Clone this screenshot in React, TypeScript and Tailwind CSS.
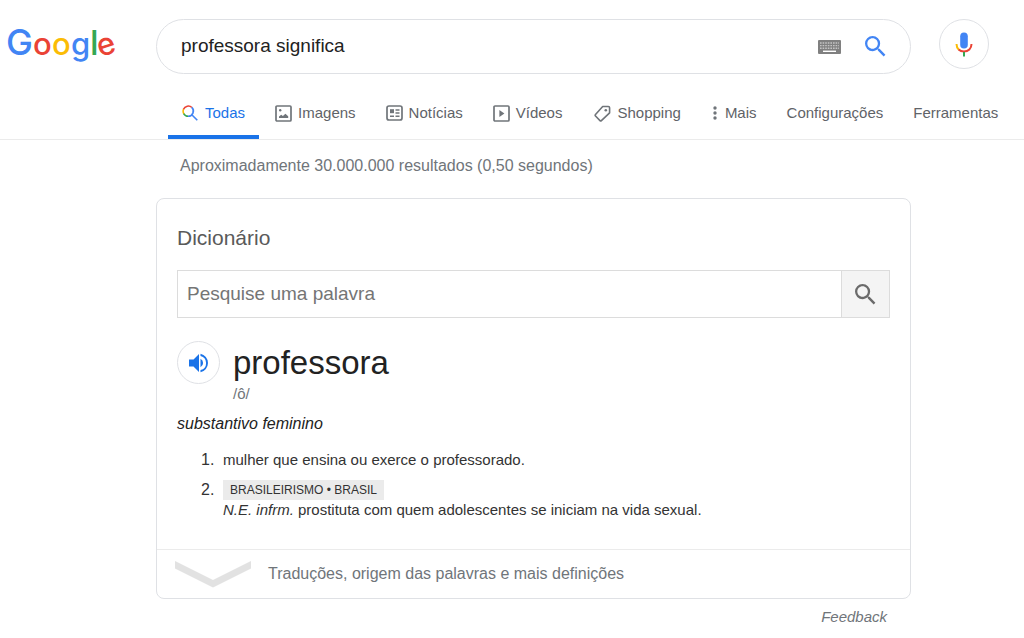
import type { ReactNode } from 'react';

type Tab = {
  label: string;
  icon?: ReactNode;
  spacing: string;
};

function GoogleLogo() {
  return (
    <svg width="118" height="52" viewBox="0 0 118 52" role="img" aria-label="Google" className="block">
      <g fontFamily="Inter, sans-serif" fontSize="31" fontWeight="500">
        <text x="-1" y="36" fontSize="36" fill="#4285f4">G</text>
        <text x="26" y="36" fill="#ea4335">o</text>
        <text x="45" y="36" fill="#fbbc05">o</text>
        <text x="64" y="36" fill="#4285f4">g</text>
        <text x="83" y="36" fontSize="34" fill="#34a853">l</text>
        <text x="90" y="36" fill="#ea4335" transform="rotate(-18 99 27)">e</text>
      </g>
    </svg>
  );
}

function SearchIcon({ className }: { className: string }) {
  return (
    <svg viewBox="3 3 18 18" className={className} fill="currentColor" aria-hidden="true">
      <path d="M15.5 14h-.79l-.28-.27A6.47 6.47 0 0 0 16 9.5 6.5 6.5 0 1 0 9.5 16c1.61 0 3.09-.59 4.23-1.57l.27.28v.79l5 4.99L20.49 19l-4.99-5zm-6 0C7.01 14 5 11.99 5 9.5S7.01 5 9.5 5 14 7.01 14 9.5 11.99 14 9.5 14z" />
    </svg>
  );
}

function KeyboardIcon() {
  return (
    <svg width="23" height="14" viewBox="0 0 23 14" aria-hidden="true">
      <rect width="23" height="14" rx="1" fill="#808080" />
      <g stroke="#c4c4c4" strokeWidth="1.4" strokeDasharray="1.6 1">
        <path d="M2 3h19M2 5.6h19M2 8.2h19" />
      </g>
      <path d="M5 11.3h13" stroke="#fff" strokeWidth="1.4" />
    </svg>
  );
}

function MicIcon() {
  return (
    <svg width="18" height="25" viewBox="0 0 18 25" fill="none" aria-hidden="true">
      <rect x="5.2" y="0.5" width="7.6" height="16" rx="3.8" fill="#4285f4" />
      <path d="M1.5 12c0 2.4.9 4.4 2.4 5.8" stroke="#fbbc05" strokeWidth="2" />
      <path d="M3.6 17.5C5 18.9 6.9 19.6 9 19.6c4.3 0 7.5-3 7.5-7.6" stroke="#ea4335" strokeWidth="2" />
      <path d="M9 20v4.4" stroke="#34a853" strokeWidth="2" />
    </svg>
  );
}

function AllIcon() {
  return (
    <svg width="16" height="16" viewBox="0 0 16 16" fill="none" strokeWidth="1.6" aria-hidden="true">
      <path d="M2 9A5.2 5.2 0 0 1 1.6 4" stroke="#fbbc05" />
      <path d="M1.5 4.3A5.2 5.2 0 0 1 9.9 2.5" stroke="#ea4335" />
      <path d="M1.7 8.6A5.2 5.2 0 0 0 6.2 11.3" stroke="#34a853" />
      <path d="M9.8 2.4A5.2 5.2 0 0 1 6 11.3M9.8 9.8l5.5 5.5" stroke="#4285f4" />
    </svg>
  );
}

function ImagesIcon() {
  return (
    <svg width="17" height="17" viewBox="0 0 17 17" fill="none" aria-hidden="true">
      <rect x="1" y="1" width="15" height="15" rx="1" stroke="#70757a" strokeWidth="1.7" />
      <circle cx="5.2" cy="5.3" r="1.2" fill="#70757a" />
      <path d="M4 13v-1.4l2.2-1.8 1.7 1.2 2.5-2.3 2.8 2.6V13z" fill="#70757a" />
    </svg>
  );
}

function NewsIcon() {
  return (
    <svg width="17" height="16" viewBox="0 0 17 16" fill="none" aria-hidden="true">
      <rect x="1" y="1" width="15" height="14" rx="2" stroke="#70757a" strokeWidth="1.7" />
      <path d="M4 4.2h4v4H4z" fill="#70757a" />
      <path d="M9.5 5h4M9.5 8h4M4 11.2h4M9.5 11.2h4" stroke="#70757a" strokeWidth="1.5" />
    </svg>
  );
}

function VideosIcon() {
  return (
    <svg width="17" height="17" viewBox="0 0 17 17" fill="none" aria-hidden="true">
      <rect x="1" y="1" width="15" height="15" rx="1" stroke="#70757a" strokeWidth="1.7" />
      <path d="M6.4 5v7l5-3.5z" fill="#70757a" />
    </svg>
  );
}

function ShoppingIcon() {
  return (
    <svg width="17" height="17" viewBox="0 0 17 17" fill="none" aria-hidden="true">
      <path
        d="M8.7 1.5h5.6c.8 0 1.3.5 1.3 1.3v5L7.4 15.6c-.5.5-1 .4-1.4 0L1.5 11c-.5-.5-.4-1 0-1.5z"
        stroke="#70757a"
        strokeWidth="1.6"
        strokeLinejoin="round"
      />
      <circle cx="11.8" cy="5.2" r="1.3" fill="#70757a" />
    </svg>
  );
}

function MoreIcon() {
  return (
    <svg width="4" height="16" viewBox="0 0 4 16" fill="#70757a" aria-hidden="true">
      <circle cx="2" cy="3" r="1.7" />
      <circle cx="2" cy="8" r="1.7" />
      <circle cx="2" cy="13" r="1.7" />
    </svg>
  );
}

function SpeakerIcon() {
  return (
    <svg width="20" height="20" viewBox="0 0 20 20" fill="#1a73e8" aria-hidden="true">
      <path d="M0 6.5v7h4.5L10 19V1L4.5 6.5z" />
      <path d="M11.5 5.8v8.4a4.7 4.7 0 0 0 0-8.4z" />
      <path d="M11.5.8v2.1a7.3 7.3 0 0 1 0 14.2v2.1a9.4 9.4 0 0 0 0-18.4z" />
    </svg>
  );
}

const tabs: Tab[] = [
  { label: 'Imagens', icon: <ImagesIcon />, spacing: 'ml-4 gap-[6px]' },
  { label: 'Notícias', icon: <NewsIcon />, spacing: 'ml-[30px] gap-[6px]' },
  { label: 'Vídeos', icon: <VideosIcon />, spacing: 'ml-[30px] gap-[6px]' },
  { label: 'Shopping', icon: <ShoppingIcon />, spacing: 'ml-8 gap-[6px]' },
  { label: 'Mais', icon: <MoreIcon />, spacing: 'ml-8 gap-2' },
  { label: 'Configurações', spacing: 'ml-[30px]' },
  { label: 'Ferramentas', spacing: 'ml-[30px]' },
];

function SearchHeader() {
  return (
    <header className="border-b border-[#ebebeb] pt-[19px]">
      <div className="flex items-start">
        <a href="#" className="w-[156px] shrink-0 pl-[7px]">
          <GoogleLogo />
        </a>
        <form
          role="search"
          className="flex h-[55px] max-w-[755px] flex-1 items-center rounded-full border border-[#dfe1e5] pr-6 pl-6"
        >
          <input
            type="text"
            aria-label="Pesquisar"
            defaultValue="professora significa"
            className="min-w-0 flex-1 bg-transparent text-[19px] text-[#222] outline-none"
          />
          <button type="button" aria-label="Ferramentas de entrada de texto">
            <KeyboardIcon />
          </button>
          <button type="submit" aria-label="Pesquisa Google" className="ml-6 text-[#4285f4]">
            <SearchIcon className="size-[21px]" />
          </button>
        </form>
        <button
          type="button"
          aria-label="Pesquisa por voz"
          className="mr-[35px] ml-7 flex size-[50px] shrink-0 items-center justify-center rounded-full border border-[#dfe1e5]"
        >
          <MicIcon />
        </button>
      </div>

      <nav className="mt-[13px] ml-[168px] flex h-[52px] text-[15px] whitespace-nowrap text-[#5f6368]">
        <a
          href="#"
          aria-current="page"
          className="flex items-center gap-[7px] border-b-4 border-[#1a73e8] px-[14px] pt-1 text-[#1a73e8]"
        >
          <AllIcon />
          Todas
        </a>
        {tabs.map((tab) => (
          <a key={tab.label} href="#" className={`flex items-center border-b-4 border-transparent pt-1 ${tab.spacing}`}>
            {tab.icon}
            {tab.label}
          </a>
        ))}
      </nav>
    </header>
  );
}

function DictionaryCard() {
  return (
    <section className="mt-[21px] rounded-lg border border-[#dfe1e5]">
      <div className="px-5 pt-6 pb-[29px]">
        <h2 className="text-[21px] leading-[30px] text-[#5a5a5a]">Dicionário</h2>

        <form className="mt-[17px] flex h-12 border border-[#dcdcdc]">
          <input
            type="text"
            aria-label="Pesquise uma palavra"
            placeholder="Pesquise uma palavra"
            className="min-w-0 flex-1 px-[9px] text-[19px] outline-none placeholder:text-[#757575]"
          />
          <button
            type="submit"
            aria-label="Pesquisar palavra"
            className="flex w-12 items-center justify-center border-l border-[#dcdcdc] bg-[#f4f4f4] text-[#6b6b6b]"
          >
            <SearchIcon className="size-[21px]" />
          </button>
        </form>

        <div className="mt-[23px] flex items-start gap-[13px]">
          <button
            type="button"
            aria-label="Ouvir pronúncia"
            className="flex size-[43px] items-center justify-center rounded-full border border-[#dfe1e5]"
          >
            <SpeakerIcon />
          </button>
          <div>
            <h3 className="text-[33px] leading-[44px] text-[#222]">professora</h3>
            <p className="text-[15px] leading-[17px] text-[#70757a]">/ô/</p>
          </div>
        </div>

        <p className="mt-3 text-base leading-5 text-[#222] italic">substantivo feminino</p>

        <ol className="mt-4 text-[15px] leading-5 text-[#333]">
          <li className="flex">
            <span className="w-[46px] shrink-0 pl-6 text-base leading-5">1.</span>
            <p>mulher que ensina ou exerce o professorado.</p>
          </li>
          <li className="mt-[10px] flex">
            <span className="w-[46px] shrink-0 pl-6 text-base leading-5">2.</span>
            <div>
              <span className="block w-fit bg-[#ebebeb] px-[7px] text-xs leading-5">BRASILEIRISMO • BRASIL</span>
              <p>
                <i>N.E. infrm.</i> prostituta com quem adolescentes se iniciam na vida sexual.
              </p>
            </div>
          </li>
        </ol>
      </div>

      <button
        type="button"
        className="flex h-[49px] w-full items-center gap-[17px] border-t border-[#ebebeb] px-[18px] text-base text-[#70757a]"
      >
        <svg width="76" height="27" viewBox="0 0 76 27" fill="#e2e2e2" aria-hidden="true">
          <path d="M0 0l38 19L76 0v7.5L38 26.5 0 7.5z" />
        </svg>
        Traduções, origem das palavras e mais definições
      </button>
    </section>
  );
}

export default function App() {
  return (
    <div className="bg-white font-['Liberation_Sans',Arial,sans-serif]">
      <SearchHeader />
      <main className="mr-[113px] ml-[156px] max-w-[755px]">
        <p className="mt-[14px] pl-6 text-base leading-[23px] text-[#70757a]">
          Aproximadamente 30.000.000 resultados (0,50 segundos)
        </p>
        <DictionaryCard />
        <div className="flex justify-end pt-2 pr-6 text-[15px] leading-5 text-[#70757a] italic">
          <a href="#">Feedback</a>
        </div>
      </main>
    </div>
  );
}
